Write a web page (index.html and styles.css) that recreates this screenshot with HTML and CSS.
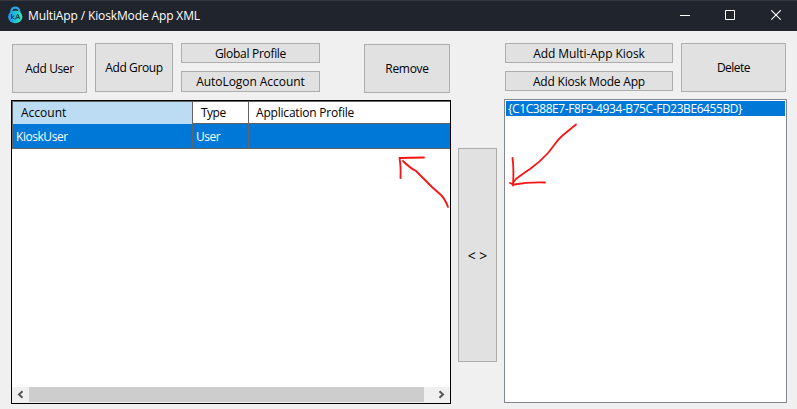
FILE: index.html
```
<!DOCTYPE html>
<html lang="en">
<head>
<meta charset="utf-8">
<title>MultiApp / KioskMode App XML</title>
<link rel="stylesheet" href="styles.css">
</head>
<body>
<div class="window">
  <header class="titlebar">
    <svg class="logo" width="16" height="18" viewBox="0 0 16 18">
      <defs><linearGradient id="g" x1="0" x2="1"><stop offset="0" stop-color="#1e8ff0"/><stop offset="1" stop-color="#2df0b8"/></linearGradient></defs>
      <path d="M3.300 7V5.200a4 3.600 0 0 1 8 0V7" fill="none" stroke="#2ba5e0" stroke-width="2.200"/>
      <ellipse cx="7.200" cy="10.800" rx="7.200" ry="6.400" fill="url(#g)"/>
      <path d="M3.500 8v5M6.200 9.700 4 11.300l2.400 1.700M7.600 13.200l1.900-4.900h.4l1.900 4.900M8.400 11.700h2.800" fill="none" stroke="#103448"/>
    </svg>
    <h1 class="title">MultiApp / KioskMode App XML</h1>
    <svg class="controls" width="107" height="12" viewBox="0 0 107 12">
      <path d="M0 5.5h10M45.5 .5h9v9h-9z" fill="none" stroke="#fff"/>
      <path d="M91.3 .3l9.4 9.4M100.7 .3l-9.4 9.4" fill="none" stroke="#fff" stroke-width="1.1"/>
    </svg>
  </header>
  <main class="content">
    <section class="accounts">
      <div class="toolbar">
        <button class="btn add-user"><span class="t-user">Add User</span></button>
        <button class="btn add-group"><span class="t-group">Add Group</span></button>
        <div class="stack profiles">
          <button class="btn"><span class="t-global">Global Profile</span></button>
          <button class="btn tall"><span class="t-auto">AutoLogon Account</span></button>
        </div>
        <button class="btn remove"><span class="t-remove">Remove</span></button>
      </div>
      <div class="grid">
        <div class="row head"><div class="cell sorted">Account</div><div class="cell t-type">Type</div><div class="cell t-app">Application Profile</div></div>
        <div class="row selected"><div class="cell">KioskUser</div><div class="cell">User</div><div class="cell"></div></div>
        <div class="scrollbar">
          <svg width="17" height="15" viewBox="0 0 17 15"><path d="M10.5 4.2 7 7.5l3.5 3.3" fill="none" stroke="#555" stroke-width="2"/></svg>
          <div class="thumb"></div>
          <svg width="26" height="15" viewBox="0 0 26 15"><path d="M15.5 4.2 19 7.5l-3.5 3.3" fill="none" stroke="#555" stroke-width="2"/></svg>
        </div>
      </div>
    </section>
    <button class="btn swap">&lt; &gt;</button>
    <section class="kiosks">
      <div class="toolbar">
        <div class="stack">
          <button class="btn"><span class="t-multi">Add Multi-App Kiosk</span></button>
          <button class="btn"><span class="t-mode">Add Kiosk Mode App</span></button>
        </div>
        <button class="btn delete"><span class="t-delete">Delete</span></button>
      </div>
      <div class="listbox"><div class="item">{C1C388E7-F8F9-4934-B75C-FD23BE6455BD}</div></div>
    </section>
  </main>
  <svg class="marks" width="797" height="409" viewBox="0 0 797 409">
    <path d="M448 207Q445 199 441 195L432 187L425 180L416 171Q410 168 403 161M424 157.5L399.5 158Q401 166 400.5 178"/>
    <path d="M576 124.5Q568 131 562 136C556 141 555 145 548 153Q540 162 530 169Q521 175 516 179L512 184M512.5 158Q514 168 513 185.500M545 182.500Q528 182 514 184.500L510 183"/>
  </svg>
</div>
</body>
</html>
```
FILE: styles.css
```
* { box-sizing: border-box; }
body { margin: 0; font: 12px/16px "Open Sans", "Noto Sans", sans-serif; color: #000; }
.window { position: relative; width: 797px; height: 409px; background: #f0f0f0; overflow: hidden; }
.titlebar { display: flex; height: 31px; background: #20242c; border-top: 1px solid #343841; color: #fff; padding: 5px 10px 0 8px; }
.title { margin: 1px auto 0 4px; font-size: 12px; font-weight: 400; line-height: 18px; letter-spacing: -.13px; white-space: nowrap; }
.controls { margin-top: 4px; }
.content { display: flex; }
.accounts { width: 440px; margin-left: 11px; }
.toolbar { display: flex; align-items: flex-start; height: 69px; padding: 12px 1px 0; }
.btn { display: flex; align-items: center; justify-content: center; margin: 0; padding: 0; background: #e1e1e1; border: 1px solid #adadad; border-radius: 0; font: inherit; color: inherit; white-space: nowrap; }
.add-user { width: 75px; height: 49px; margin-top: 1px; }
.add-group { width: 78px; height: 49px; margin-left: 8px; }
.stack { display: flex; flex-direction: column; gap: 8px; width: 168px; }
.stack .btn { height: 20px; padding-top: 2px; }
.stack .tall { height: 21px; padding-top: 0; }
.profiles { width: 139px; margin-left: 8px; }
.remove { width: 86px; height: 49px; margin: 1px 0 0 auto; }
.t-user, .t-group { letter-spacing: -.4px; }
.t-global { letter-spacing: -.3px; }
.t-auto, .t-multi { letter-spacing: -.06px; }
.t-remove { letter-spacing: -.3px; }
.t-mode { letter-spacing: -.2px; }
.t-delete { letter-spacing: -.5px; }
.grid { display: flex; flex-direction: column; height: 304px; border: 1px solid #000; background: #fff; }
.row { display: grid; grid-template-columns: 180px 56px 1fr; border-left: 1px solid #646464; }
.head { height: 23px; border-top: 1px solid #646464; border-bottom: 1px solid #646464; }
.cell { border-right: 1px solid #646464; white-space: nowrap; padding-left: 3px; line-height: 25px; }
.cell:last-child { border-right: 0; }
.head .cell { padding-left: 7px; line-height: 22px; }
.head .sorted { background: #bcdcf4; padding-left: 8px; }
.head .t-type { padding-left: 8px; letter-spacing: -.5px; }
.head .t-app { letter-spacing: -.2px; }
.selected { height: 25px; background: #0078d7; color: #fff; border-bottom: 1px solid #646464; letter-spacing: -.45px; }
.scrollbar { display: flex; height: 16px; margin-top: auto; background: #f0f0f0; }
.scrollbar .thumb { flex: 1; height: 15px; background: #cdcdcd; }
.swap { width: 39px; height: 214px; margin: 117px 0 0 7px; padding-top: 1px; font-size: 14px; }
.kiosks { width: 283px; margin-left: 7px; }
.kiosks .toolbar { height: 68px; }
.delete { width: 105px; height: 49px; margin-left: 8px; }
.listbox { height: 304px; border: 1px solid #828790; background: #fff; padding: 1px; }
.item { height: 15px; line-height: 15px; padding-left: 2px; background: #0078d7; color: #fff; white-space: nowrap; letter-spacing: -.42px; }
.marks { position: absolute; inset: 0; pointer-events: none; fill: none; stroke: #f81414; stroke-width: 1.8; stroke-linecap: round; stroke-linejoin: round; }
```
